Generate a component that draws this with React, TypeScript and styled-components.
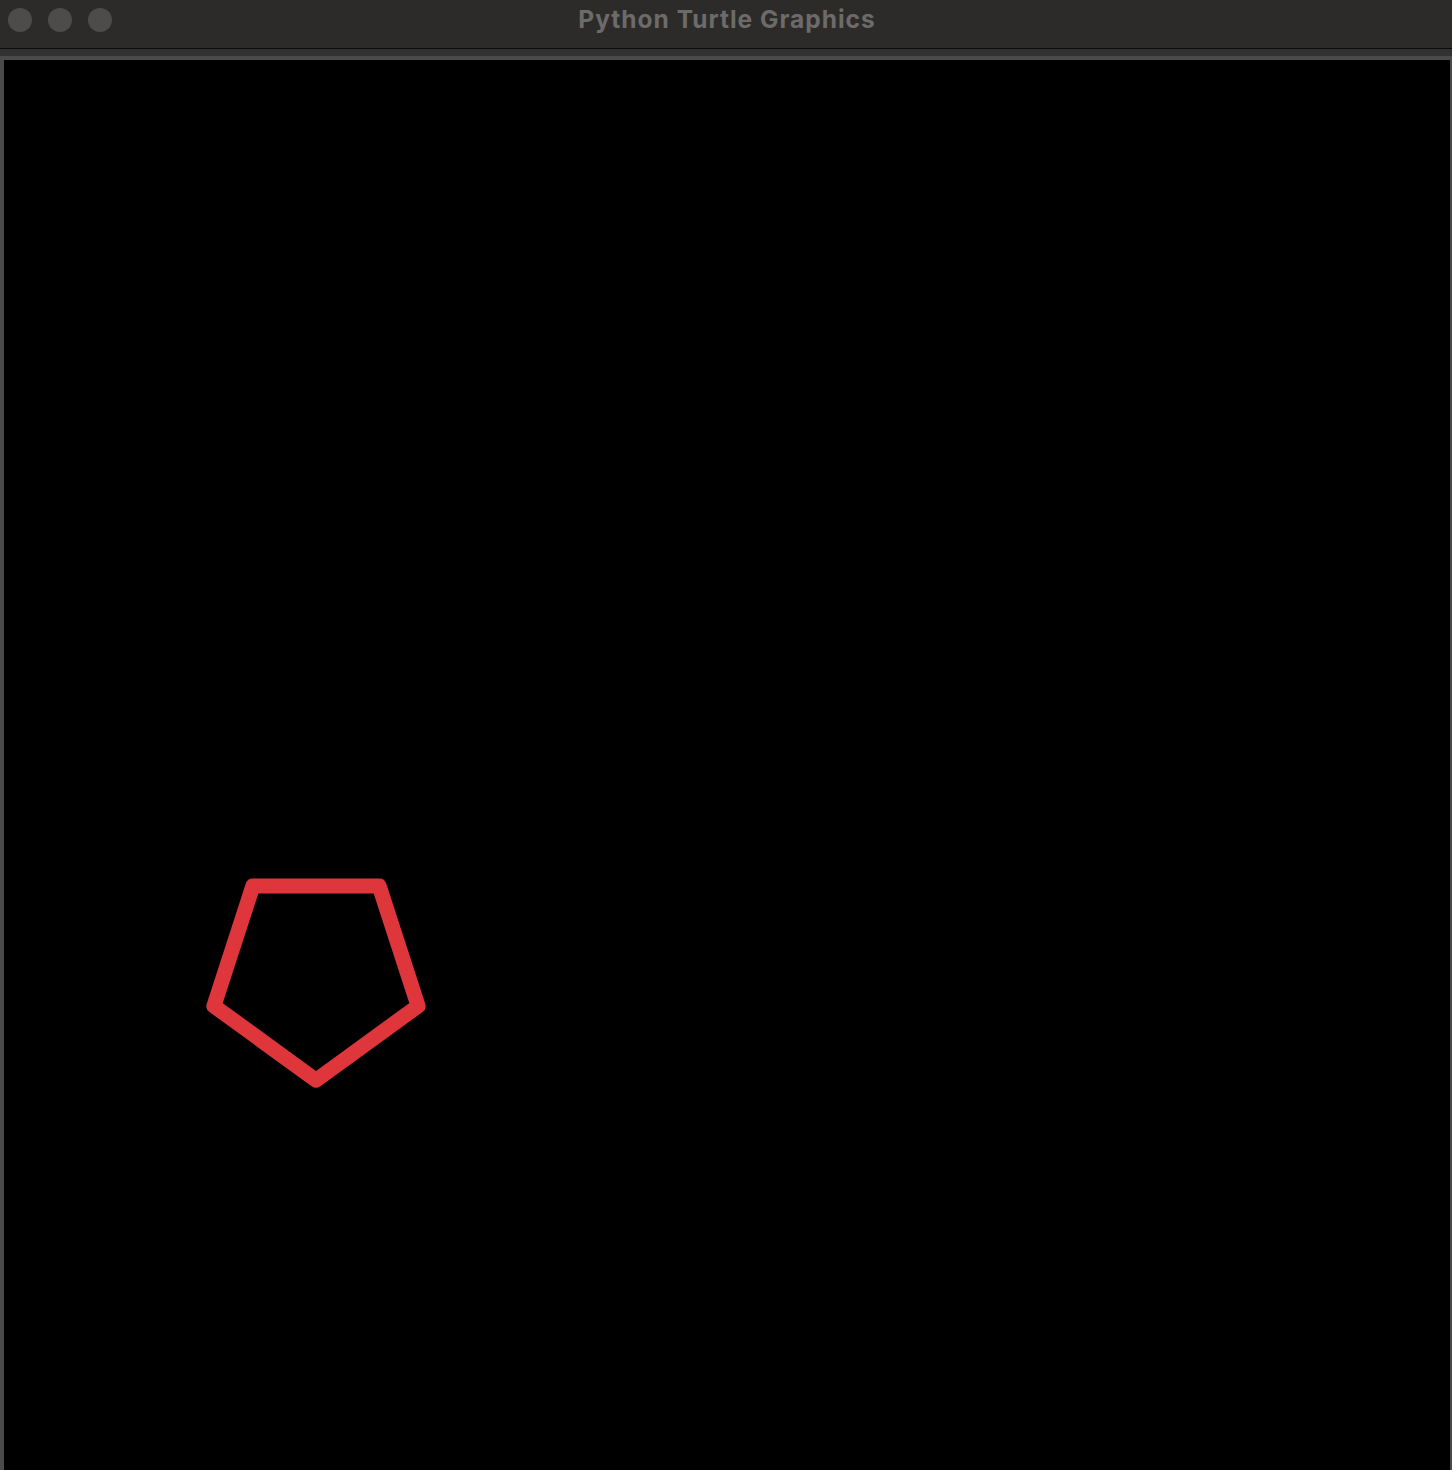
import React from "react";
import styled, { createGlobalStyle } from "styled-components";

const Global = createGlobalStyle`
  html, body { margin: 0; padding: 0; background: #000; }
  #root { width: 1452px; height: 1470px; }
`;

const Window = styled.div`
  width: 1452px;
  height: 1470px;
  display: flex;
  flex-direction: column;
  background: #2c2b2a;
  overflow: hidden;
`;

const TitleBar = styled.div`
  position: relative;
  height: 48px;
  flex: none;
  display: flex;
  align-items: center;
  justify-content: center;
  background: #2c2b2a;
  border-bottom: 1px solid #0c0c0c;
`;

const Lights = styled.div`
  position: absolute;
  left: 8px;
  top: 8px;
  display: flex;
  gap: 16px;
`;

const Light = styled.span`
  width: 24px;
  height: 24px;
  border-radius: 50%;
  background: #4d4c4b;
`;

const Title = styled.div`
  font-family: Inter, "Open Sans", "Liberation Sans", sans-serif;
  font-weight: 700;
  font-size: 24.5px;
  letter-spacing: 1px;
  color: #6c6b6a;
  margin-top: -11px;
  margin-left: 2px;
`;

const Band = styled.div`
  height: 7px;
  flex: none;
  background: #323232;
`;

const Frame = styled.div`
  flex: 1;
  display: flex;
  padding: 4px 2px 0 4px;
  background: #4a4a4a;
  min-height: 0;
`;

const Canvas = styled.div`
  position: relative;
  flex: 1;
  background: #000;
  overflow: hidden;
`;

const Drawing = styled.svg`
  position: absolute;
  left: 0;
  top: 0;
  width: 100%;
  height: 100%;
`;

// pentagon vertices in page coords, shifted into canvas coords (-4, -60)
const pts: [number, number][] = [
  [316, 1080.2],
  [418.1, 1006.0],
  [379.1, 885.9],
  [252.9, 885.9],
  [213.9, 1006.0],
];

export default function App() {
  const points = pts.map(([x, y]) => `${x - 4},${y - 60}`).join(" ");
  return (
    <>
      <Global />
      <Window>
        <TitleBar>
          <Lights>
            <Light />
            <Light />
            <Light />
          </Lights>
          <Title>Python Turtle Graphics</Title>
        </TitleBar>
        <Band />
        <Frame>
          <Canvas>
            <Drawing viewBox="0 0 1446 1410" preserveAspectRatio="xMinYMin meet">
              <polygon
                points={points}
                fill="none"
                stroke="#df363b"
                strokeWidth={15}
                strokeLinejoin="round"
              />
            </Drawing>
          </Canvas>
        </Frame>
      </Window>
    </>
  );
}
